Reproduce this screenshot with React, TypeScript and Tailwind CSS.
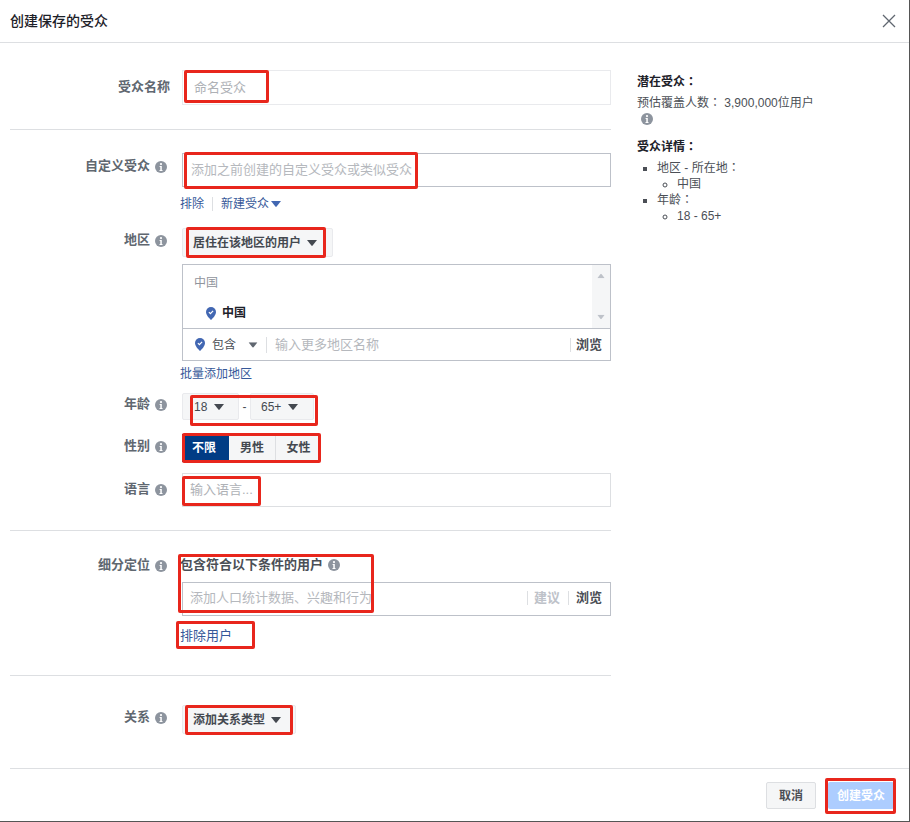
import React from "react";

const InfoIcon = ({ className = "" }: { className?: string }) => (
  <svg viewBox="0 0 12 12" className={`w-3 h-3 shrink-0 ${className}`}>
    <circle cx="6" cy="6" r="6" fill="#8d949e" />
    <circle cx="6" cy="3.1" r="1.1" fill="#fff" />
    <path d="M4.6 5h2.2v3.9h.7V10H4.5V8.9h.8V6.1h-.7z" fill="#fff" />
  </svg>
);

const Caret = ({ color = "#444950", className = "" }: { color?: string; className?: string }) => (
  <svg viewBox="0 0 10 6" className={`w-[10px] h-[6px] shrink-0 ${className}`}>
    <path d="M0 0h10L5.6 5.6a.8.8 0 0 1-1.2 0z" fill={color} />
  </svg>
);

const Pin = ({ className = "" }: { className?: string }) => (
  <svg viewBox="0 0 10 13" className={`w-[10px] h-[13px] shrink-0 ${className}`}>
    <path d="M5 0a5 5 0 0 1 5 5c0 3-3 6-5 8-2-2-5-5-5-8a5 5 0 0 1 5-5z" fill="#4267b2" />
    <path d="M2.9 5.2l1.5 1.5 2.7-2.8" fill="none" stroke="#fff" strokeWidth="1.2" />
  </svg>
);

// the reference draws full-width colons centred in the cell
const Colon = () => <span className="leading-none font-['Noto_Sans_CJK_TC',sans-serif]">：</span>;

type RowProps = {
  label: string;
  info?: boolean;
  labelClass?: string;
  children: React.ReactNode;
  className?: string;
};

const Row = ({ label, info = true, labelClass = "", children, className = "" }: RowProps) => (
  <div className={`flex ${className}`}>
    <div className={`w-[172px] shrink-0 flex justify-end items-start gap-[5px] text-[13px] leading-[16px] font-bold text-[#606770] ${labelClass}`}>
      <span>{label}</span>
      {info && <InfoIcon className="mt-[3px]" />}
    </div>
    <div className="w-[429px] shrink-0">{children}</div>
  </div>
);

const Rule = ({ className = "" }: { className?: string }) => <div className={`h-px bg-[#dddfe2] ${className}`} />;

const marks = [
  "left-[184px] top-[70px] w-[85px] h-[33px]",
  "left-[184px] top-[152px] w-[234px] h-[37px]",
  "left-[186px] top-[227px] w-[140px] h-[31px]",
  "left-[190px] top-[395px] w-[128px] h-[31px]",
  "left-[182px] top-[433px] w-[139px] h-[30px]",
  "left-[182px] top-[476px] w-[79px] h-[30px]",
  "left-[178px] top-[554px] w-[196px] h-[59px]",
  "left-[176px] top-[621px] w-[79px] h-[28px]",
  "left-[185px] top-[705px] w-[108px] h-[30px]",
  "left-[825px] top-[778px] w-[71px] h-[36px]",
];

export default function App() {
  return (
    <div className="relative w-[910px] h-[822px] overflow-hidden bg-white border-r border-b border-[#555] font-['Liberation_Sans','Noto_Sans_CJK_SC',sans-serif] text-[12px] text-[#4b4f56]">
      {/* Header */}
      <div className="h-[43px] flex items-center justify-between pl-[10px] pr-[13px] border-b border-[#dddfe2]">
        <h1 className="text-[14px] font-medium text-[#1d2129]">创建保存的受众</h1>
        <svg viewBox="0 0 14 14" className="w-[14px] h-[14px]">
          <path d="M1 1l12 12M13 1L1 13" stroke="#606770" strokeWidth="1.3" fill="none" />
        </svg>
      </div>

      <div className="flex h-[725px]">
        {/* Form */}
        <div className="w-[611px] shrink-0 pl-[10px] pt-[27px]">
          <Row label="受众名称" info={false} labelClass="pr-[12px] pt-[9px]">
            <div className="h-[35px] border border-[#e9eaed] flex items-center pl-[11px] text-[13px] text-[#aeb1b6]">命名受众</div>
          </Row>
          <Rule className="mt-[24px] mb-[23px]" />

          <Row label="自定义受众" labelClass="pr-[15px] pt-[5px]">
            <div className="h-[34px] border border-[#bdc1c9] flex items-center pl-[8px] text-[13px] text-[#b5b8bd]">添加之前创建的自定义受众或类似受众</div>
            <div className="flex items-center mt-[9px] ml-[-2px] h-[15px] text-[12px] text-[#365899]">
              <span>排除</span>
              <span className="w-px h-[14px] bg-[#dddfe2] mx-[8px]" />
              <span>新建受众</span>
              <Caret color="#4267b2" className="ml-[2px]" />
            </div>
          </Row>

          <Row label="地区" labelClass="pr-[15px] pt-[4px]" className="mt-[17px]">
            <div className="w-[151px] h-[29px] border border-[#e9eaed] rounded-[2px] bg-[#f5f6f7] flex items-center pl-[10px] font-bold text-[#444950]">
              居住在该地区的用户
              <Caret className="ml-[6px]" />
            </div>
            <div className="mt-[7px] h-[97px] border border-[#bdc1c9] flex flex-col">
              <div className="h-[64px] flex border-b border-[#bdc1c9]">
                <div className="flex-1 pl-[11px]">
                  <div className="mt-[10px] text-[#90949c] leading-[16px]">中国</div>
                  <div className="flex items-center gap-[6px] mt-[14px] ml-[12px] font-bold text-[#1d2129] leading-[16px]">
                    <Pin />
                    中国
                  </div>
                </div>
                <div className="w-[18px] bg-[#f5f6f7] flex flex-col items-center justify-between py-[8px]">
                  <Caret color="#bec2c9" className="rotate-180 scale-75" />
                  <Caret color="#bec2c9" className="scale-75" />
                </div>
              </div>
              <div className="flex-1 flex items-center pl-[12px] pr-[8px]">
                <Pin />
                <span className="ml-[7px]">包含</span>
                <Caret color="#606770" className="ml-[12px] scale-90" />
                <span className="w-px h-[16px] bg-[#dddfe2] ml-[8px]" />
                <span className="ml-[8px] text-[13px] text-[#b5b8bd]">输入更多地区名称</span>
                <span className="ml-auto w-px h-[14px] bg-[#dddfe2]" />
                <span className="ml-[5px] text-[13px] font-bold text-[#4b4f56]">浏览</span>
              </div>
            </div>
            <div className="mt-[5px] h-[17px] ml-[-2px] text-[#365899] leading-[17px]">批量添加地区</div>
          </Row>

          <Row label="年龄" labelClass="pr-[15px] pt-[3px]" className="mt-[10px]">
            <div className="flex items-center h-[29px] pb-[2px]">
              <div className="w-[57px] h-[27px] border border-[#e9eaed] rounded-[2px] bg-[#f5f6f7] flex items-center pl-[11px] text-[#444950] font-medium">
                18
                <Caret className="ml-[7px]" />
              </div>
              <span className="w-[11px] text-center">-</span>
              <div className="w-[64px] h-[27px] border border-[#e9eaed] rounded-[2px] bg-[#f5f6f7] flex items-center pl-[10px] text-[#444950] font-medium">
                65+
                <Caret className="ml-[7px]" />
              </div>
            </div>
          </Row>

          <Row label="性别" labelClass="pr-[15px] pt-[4px]" className="mt-[12px]">
            <div className="flex h-[28px] w-[139px] font-bold">
              <div className="w-[47px] bg-[#003c85] text-white flex items-center justify-center pr-[3px]">不限</div>
              <div className="w-[47px] bg-[#f5f6f7] border-r border-[#dddfe2] flex items-center justify-center text-[#444950]">男性</div>
              <div className="w-[45px] bg-[#f5f6f7] flex items-center justify-center text-[#444950]">女性</div>
            </div>
          </Row>

          <Row label="语言" labelClass="pr-[15px] pt-[8px]" className="mt-[11px]">
            <div className="h-[34px] border border-[#dddfe2] flex items-center pl-[7px] text-[13px] text-[#aeb1b6]">输入语言...</div>
          </Row>
          <Rule className="mt-[23px] mb-[26px]" />

          <Row label="细分定位" labelClass="pr-[15px]">
            <div className="h-[16px] ml-[-2px] flex items-center gap-[4px] text-[13px] font-bold text-[#4b4f56]">
              包含符合以下条件的用户
              <InfoIcon className="ml-[1px]" />
            </div>
            <div className="mt-[9px] h-[34px] border border-[#bdc1c9] flex items-center pl-[7px] pr-[8px] pb-[2px] text-[13px]">
              <span className="text-[#b5b8bd]">添加人口统计数据、兴趣和行为</span>
              <span className="ml-auto w-px h-[14px] bg-[#dddfe2]" />
              <span className="ml-[6px] font-bold text-[#bec2c9]">建议</span>
              <span className="ml-[8px] w-px h-[14px] bg-[#dddfe2]" />
              <span className="ml-[7px] font-bold text-[#4b4f56]">浏览</span>
            </div>
            <div className="mt-[12px] ml-[-2px] text-[13px] leading-[16px] text-[#365899]">排除用户</div>
          </Row>
          <Rule className="mt-[31px] mb-[29px]" />

          <Row label="关系" labelClass="pr-[15px] pt-[4px]">
            <div className="w-[114px] h-[29px] border border-[#e9eaed] rounded-[2px] bg-[#f5f6f7] flex items-center pl-[10px] font-bold text-[#444950]">
              添加关系类型
              <Caret className="ml-[6px]" />
            </div>
          </Row>
        </div>

        {/* Summary */}
        <div className="flex-1 pl-[26px] pt-[31px] text-[#4b4f56] leading-[16px]">
          <h2 className="font-bold text-[#1d2129]">潜在受众<Colon /></h2>
          <p className="mt-[5px]">预估覆盖人数<Colon /> 3,900,000位用户</p>
          <InfoIcon className="ml-[4px] mt-[2px]" />
          <h2 className="font-bold text-[#1d2129] mt-[14px]">受众详情<Colon /></h2>
          <ul className="mt-[5px] ml-[20px] list-[square]">
            <li>
              地区 - 所在地<Colon />
              <ul className="ml-[20px] list-[circle]">
                <li>中国</li>
              </ul>
            </li>
            <li>
              年龄<Colon />
              <ul className="ml-[20px] list-[circle]">
                <li>18 - 65+</li>
              </ul>
            </li>
          </ul>
        </div>
      </div>

      {/* Footer */}
      <div className="ml-[10px] border-t border-[#dddfe2] h-[53px] flex items-start justify-end gap-[12px] pt-[13px] pr-[15px] font-bold">
        <button className="w-[50px] h-[27px] rounded-[2px] border border-[#dddfe2] bg-[#f5f6f7] text-[#4b4f56]">取消</button>
        <button className="w-[66px] h-[27px] rounded-[2px] bg-[#adcdff] text-white">创建受众</button>
      </div>

      {/* Red annotation boxes */}
      {marks.map((m) => (
        <div key={m} className={`absolute border-[3px] border-[#e8261c] rounded-[2px] ${m}`} />
      ))}
    </div>
  );
}
